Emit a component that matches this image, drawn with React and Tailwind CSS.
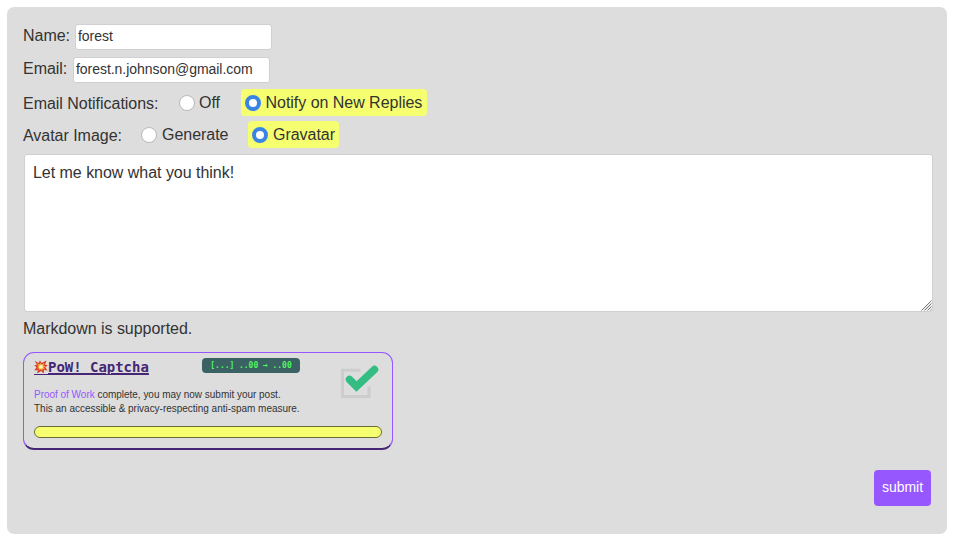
import React from "react";

function Field({ label, value, labelWidth }) {
  return (
    <div className="flex h-[26px]">
      <label className={"shrink-0 whitespace-nowrap leading-[24px] " + labelWidth}>{label}</label>
      <input
        type="text"
        defaultValue={value}
        className="h-[26px] w-[197px] rounded-[3px] border border-[#d0d0d0] bg-white px-[2px] pb-[2px] text-[14px] tracking-[-0.04px] text-[#333] outline-none"
      />
    </div>
  );
}

function Radio({ checked }) {
  return checked ? (
    <span className="size-4 shrink-0 rounded-full border-4 border-[#3a84e6] bg-white" />
  ) : (
    <span className="size-4 shrink-0 rounded-full border border-[#bcb8b4] bg-white" />
  );
}

function Option({ label, checked, className }) {
  return (
    <label
      className={
        "flex h-[27px] items-center whitespace-nowrap rounded-[4px] pl-1 " +
        (checked ? "bg-[#f6ff70] " : "") +
        className
      }
    >
      <Radio checked={checked} />
      <span className="leading-[27px]">{label}</span>
    </label>
  );
}

function Burst() {
  return (
    <svg viewBox="0 0 14 14" className="size-[14px] shrink-0">
      <path
        d="M0.5 .8 4.5 3 6 .6 7.5 3 12.5 .5 11 4.5 13.8 5.6 11.2 7.3 13.5 10.5 10 10 9.7 13.5 7 11 3.2 13.6 3.7 10 .3 10.4 2.5 7.3 .2 5.3 3 4.7Z"
        fill="#d83b27"
      />
      <path
        d="M3 2.8 5.5 4.3 6.2 2.8 7.5 4.4 10.5 2.8 9.6 5.4 11.8 6.2 9.7 7.4 11.2 9.5 8.8 9 8.3 11 6.8 9.3 4.5 10.8 5 8.5 2.8 8.6 4.4 6.8 2.8 5.5 4.5 5.2Z"
        fill="#f7a53b"
      />
      <circle cx="7" cy="6.8" r="2" fill="#fff0b5" />
    </svg>
  );
}

function CheckMark() {
  return (
    <svg viewBox="0 0 40 36" fill="none" className="h-9 w-10 shrink-0">
      <path d="M20.5 7.2H2.5V33.5H29V23.5" stroke="#cdcdcd" strokeWidth="3" />
      <path d="M9.5 16.5 16.5 23.5 34.5 6.5" stroke="#34bd82" strokeWidth="7.5" strokeLinecap="round" strokeLinejoin="miter" />
    </svg>
  );
}

function ResizeGrip() {
  return (
    <svg viewBox="0 0 11 11" fill="none" className="pointer-events-none absolute bottom-px right-px size-[11px]">
      <path d="M0.5 10.5 10.5 .5M3.5 10.5 10.5 3.5M6.5 10.5 10.5 6.5M9.5 10.5 10.5 9.5" stroke="#777" />
      <path d="M2 10.5 10.5 2M5 10.5 10.5 5M8 10.5 10.5 8" stroke="#ccc" strokeWidth=".7" />
    </svg>
  );
}

function Captcha() {
  return (
    <div className="mt-[11px] h-[98px] w-[370px] rounded-[11px] border border-b-2 border-[#9658fe] border-b-[#452775] px-[10px]">
      <div className="flex h-[73px] justify-between">
        <div className="w-[266px]">
          <div className="flex items-start justify-between pt-[5px]">
            <a className="mt-[2px] flex h-[15px] border-b border-[#452775] font-['DejaVu_Sans_Mono',monospace] text-[14px] font-bold leading-[15px] text-[#452775]">
              <Burst />
              <span className="whitespace-pre underline">PoW! Captcha</span>
            </a>
            <span className="flex h-[15px] w-[98px] items-center justify-center whitespace-nowrap rounded-[4px] bg-[#3b6262] font-['DejaVu_Sans_Mono',monospace] text-[8px] font-bold text-[#50f660]">
              <span className="inline-block scale-y-[1.15]">[...] ..00 → ..00</span>
            </span>
          </div>
          <p className="mt-[13px] whitespace-nowrap text-[10px] leading-[14px] tracking-[-0.02px]">
            <a className="text-[#9658fe]">Proof of Work</a> complete, you may now submit your post.
            <br />
            This an accessible &amp; privacy-respecting anti-spam measure.
          </p>
        </div>
        <div className="mr-[2px] pt-[10px]">
          <CheckMark />
        </div>
      </div>
      <div className="h-3 rounded-[6px] border border-[#6b6c38] bg-[#f6ff70]" />
    </div>
  );
}

export default function App() {
  return (
    <div className="h-[543px] bg-white pl-[7px] pt-[7px] font-['Liberation_Sans',Arial,sans-serif] text-[16px] tracking-[-0.03px] text-[#333]">
      <form className="flex h-[527px] w-[940px] flex-col rounded-[7px] bg-[#ddd] pl-4 pr-[14px] pt-[17px]">
        <Field label="Name:" value="forest" labelWidth="w-[52px]" />
        <div className="h-[7px]" />
        <Field label="Email:" value="forest.n.johnson@gmail.com" labelWidth="w-[50px]" />
        <div className="mt-[6px] flex h-[27px]">
          <span className="w-[152px] whitespace-nowrap leading-[29px]">Email Notifications:</span>
          <Option label="Off" className="w-[66px] gap-1" />
          <Option label="Notify on New Replies" checked className="w-[186px] gap-[4.5px]" />
        </div>
        <div className="mt-[5px] flex h-[27px]">
          <span className="w-[114px] whitespace-nowrap leading-[29px]">Avatar Image:</span>
          <Option label="Generate" className="w-[111px] gap-[5px]" />
          <Option label="Gravatar" checked className="w-[91px] gap-[5px]" />
        </div>
        <div className="relative ml-px mt-[6px] h-[158px] w-[909px] shrink-0">
          <textarea
            defaultValue="Let me know what you think!"
            className="block size-full resize-none rounded-[3px] border border-[#d0d0d0] bg-white px-2 py-[8px] leading-[20px] outline-none"
          />
          <ResizeGrip />
        </div>
        <p className="mt-[7px] leading-[20px]">Markdown is supported.</p>
        <div className="h-[2px]" />
        <Captcha />
        <button
          type="button"
          className="mr-[2px] mt-[20px] h-9 w-[57px] self-end rounded-[4px] bg-[#9658fe] pb-[2px] text-[14px] text-white"
        >
          submit
        </button>
      </form>
    </div>
  );
}
